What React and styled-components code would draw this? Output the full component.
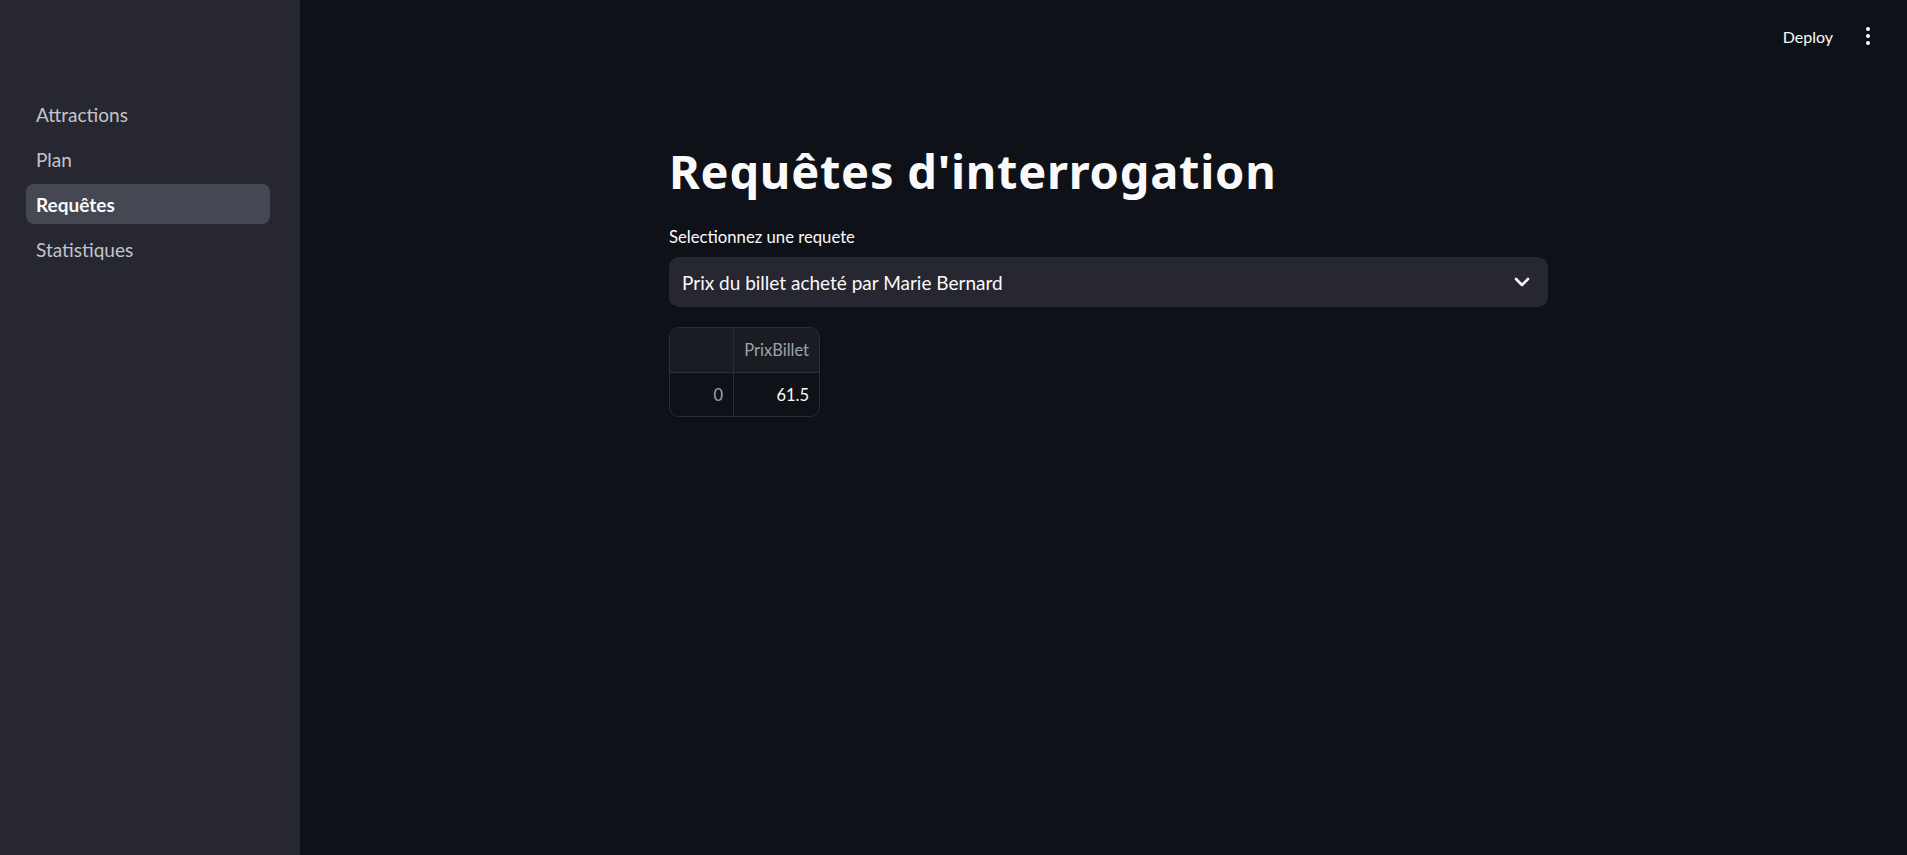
import React from "react";
import styled, { createGlobalStyle } from "styled-components";

const GlobalStyle = createGlobalStyle`
  html, body { margin: 0; padding: 0; background: #0e1117; }
  body { font-family: "Lato", "Noto Sans", sans-serif; color: #fafafa; }
  * { box-sizing: border-box; }
`;

const Shell = styled.div`
  display: flex;
  width: 100%;
  height: 100vh;
  background: #0e1117;
  overflow: hidden;
`;

const Sidebar = styled.aside`
  width: 300px;
  flex: none;
  background: #262730;
  padding: 94px 30px 0 26px;
`;

const Nav = styled.nav`
  display: flex;
  flex-direction: column;
  gap: 5px;
`;

const NavItem = styled.a`
  display: flex;
  align-items: center;
  height: 40px;
  padding: 0 10px;
  border-radius: 8px;
  font-size: 19px;
  text-decoration: none;
  cursor: pointer;
  color: ${(p) => (p.$active ? "#fafafa" : "#c3c4ca")};
  font-weight: ${(p) => (p.$active ? 700 : 400)};
  background: ${(p) => (p.$active ? "#454753" : "transparent")};
`;

const Main = styled.main`
  flex: 1;
  display: flex;
  flex-direction: column;
  padding-left: 10px;
`;

const Header = styled.header`
  height: 72px;
  display: flex;
  align-items: center;
  justify-content: flex-end;
  gap: 11px;
  padding-right: 27px;
`;

const DeployButton = styled.button`
  background: transparent;
  border: none;
  color: #fafafa;
  font-family: inherit;
  font-size: 16px;
  padding: 0 12px;
  height: 40px;
  cursor: pointer;
`;

const IconButton = styled.button`
  background: transparent;
  border: none;
  width: 24px;
  height: 40px;
  padding: 0;
  display: flex;
  align-items: center;
  justify-content: center;
  color: #fafafa;
  cursor: pointer;
`;

const Content = styled.section`
  width: 879px;
  margin: 0 auto;
  padding-top: 72px;
  display: flex;
  flex-direction: column;
`;

const Title = styled.h1`
  margin: 0;
  font-family: "Noto Sans", "Open Sans", sans-serif;
  font-size: 47px;
  letter-spacing: 0.75px;
  font-weight: 700;
  line-height: 55px;
  color: #fafafa;
`;

const Label = styled.label`
  margin-top: 27px;
  font-size: 16.7px;
  line-height: 22px;
  color: #fafafa;
`;

const SelectBox = styled.div`
  margin-top: 9px;
  height: 50px;
  border-radius: 10px;
  background: #262730;
  display: flex;
  align-items: center;
  justify-content: space-between;
  padding: 0 14px 0 13px;
  font-size: 19px;
  color: #fafafa;
  cursor: pointer;
`;

const Table = styled.div`
  margin-top: 20px;
  align-self: flex-start;
  display: grid;
  grid-template-columns: 64px 85px;
  border: 1px solid #2c2e37;
  border-radius: 10px;
  overflow: hidden;
`;

const Cell = styled.div`
  height: ${(p) => (p.$head ? "45px" : "43px")};
  display: flex;
  align-items: center;
  justify-content: flex-end;
  padding-right: 10px;
  font-size: 16.5px;
  background: ${(p) => (p.$head ? "#1a1c23" : "#0e1117")};
  color: ${(p) => (p.$muted ? "#a0a2a8" : "#fafafa")};
  border-right: ${(p) => (p.$last ? "none" : "1px solid #2c2e37")};
  border-bottom: ${(p) => (p.$head ? "1px solid #2c2e37" : "none")};
`;

const Chevron = () => (
  <svg width="24" height="24" viewBox="0 0 24 24" fill="none" stroke="#fafafa" strokeWidth="2.6" strokeLinecap="round" strokeLinejoin="round">
    <path d="M6 9l6 6 6-6" />
  </svg>
);

const Kebab = () => (
  <svg width="8" height="24" viewBox="0 0 8 24" fill="#fafafa">
    <circle cx="4" cy="5" r="2" />
    <circle cx="4" cy="12" r="2" />
    <circle cx="4" cy="19" r="2" />
  </svg>
);

const pages = ["Attractions", "Plan", "Requêtes", "Statistiques"];

export default function App() {
  return (
    <>
      <GlobalStyle />
      <Shell>
        <Sidebar>
          <Nav>
            {pages.map((p) => (
              <NavItem key={p} $active={p === "Requêtes"}>
                {p}
              </NavItem>
            ))}
          </Nav>
        </Sidebar>
        <Main>
          <Header>
            <DeployButton>Deploy</DeployButton>
            <IconButton aria-label="menu">
              <Kebab />
            </IconButton>
          </Header>
          <Content>
            <Title>Requêtes d'interrogation</Title>
            <Label>Selectionnez une requete</Label>
            <SelectBox>
              <span>Prix du billet acheté par Marie Bernard</span>
              <Chevron />
            </SelectBox>
            <Table>
              <Cell $head />
              <Cell $head $last $muted>PrixBillet</Cell>
              <Cell $muted>0</Cell>
              <Cell $last>61.5</Cell>
            </Table>
          </Content>
        </Main>
      </Shell>
    </>
  );
}
